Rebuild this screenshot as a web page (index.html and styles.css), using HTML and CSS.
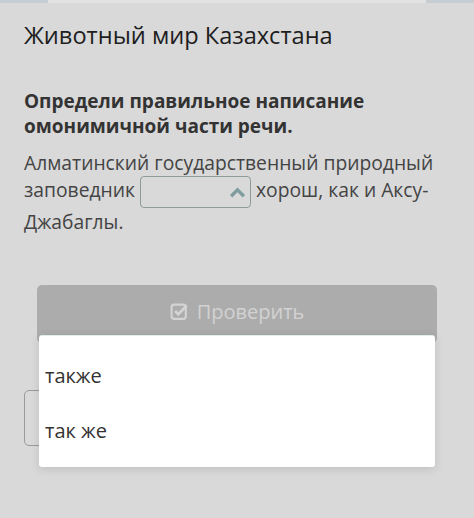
FILE: index.html
```html
<!DOCTYPE html>
<html lang="ru">

<head>
    <meta charset="UTF-8">
    <meta name="viewport" content="width=device-width, initial-scale=1.0">
    <title>Животный мир Казахстана</title>
    <link rel="stylesheet" href="styles.css">
</head>

<body>
    <div class="topbar">
        <div class="tab"></div>
        <div class="tab"></div>
    </div>
    <div class="page">
        <!--Title---------------------------------------------------------------->
        <h1 class="title">Животный мир Казахстана</h1>

        <!--Task----------------------------------------------------------------->
        <p class="task">Определи правильное написание омонимичной части речи.</p>
        <p class="text">Алматинский государственный природный заповедник
            <span class="select"><svg class="chevron" viewBox="0 0 16 10" width="17" height="11">
                    <path d="M2 8.5 L8 2.5 L14 8.5" fill="none" stroke="#7f9c9e" stroke-width="3.2" />
                </svg></span>
            хорош, как и Аксу-Джабаглы.</p>

        <!--Check button + dropdown---------------------------------------------->
        <div class="actions">
            <button class="btnCheck" type="button">
                <svg class="checkIcon" viewBox="0 0 18 18" width="19" height="19">
                    <rect x="1.5" y="2.5" width="13.5" height="13.5" rx="2.5" fill="none" stroke="#d4d4d4"
                        stroke-width="2" />
                    <path d="M4.8 8.6 L7.8 11.6 L15.8 3.4" fill="none" stroke="#d4d4d4" stroke-width="2.6" />
                </svg>
                Проверить
            </button>
            <div class="nextBox"></div>

            <ul class="dropdown">
                <li>также</li>
                <li>так же</li>
            </ul>
        </div>
    </div>
</body>

</html>
```

FILE: styles.css
```css
body {
    margin: 0;
    background-color: #d9d9d9;
    color: #1e1e1e;
    font-family: "Open Sans", "Noto Sans", sans-serif;
}

.topbar {
    display: flex;
    justify-content: space-between;
    height: 3px;
    background-color: #e2e2e2;
}

.tab {
    width: 48px;
    background-color: #c6ced4;
}

.page {
    padding: 0 24px 70px;
}

.title {
    margin: 0;
    padding-top: 16px;
    font-size: 23.6px;
    font-weight: 400;
    line-height: 32px;
}

.task {
    margin: 38px 0 0;
    font-size: 19px;
    font-weight: 700;
    line-height: 25px;
    color: #333;
}

.text {
    margin: 10px 0 0;
    font-size: 19.3px;
    line-height: 27px;
    color: #444;
}

.select {
    display: inline-flex;
    align-items: center;
    justify-content: flex-end;
    box-sizing: border-box;
    width: 111px;
    height: 32px;
    padding-right: 4px;
    vertical-align: middle;
    border: 1px solid #8e9b9b;
    border-radius: 4px;
}

.actions {
    position: relative;
    margin-top: 50px;
}

.btnCheck {
    display: flex;
    align-items: center;
    justify-content: center;
    gap: 8px;
    width: 400px;
    height: 58px;
    margin-left: 13px;
    padding: 0 0 6px;
    border: none;
    border-radius: 5px;
    background-color: #acacac;
    color: #d2d2d2;
    font-family: inherit;
    font-size: 20px;
}

.nextBox {
    box-sizing: border-box;
    width: 60px;
    height: 56px;
    margin-top: 47px;
    border: 1px solid #9a9a9a;
    border-radius: 5px;
}

.dropdown {
    position: absolute;
    top: 50px;
    left: 15px;
    box-sizing: border-box;
    width: 396px;
    height: 132px;
    margin: 0;
    padding: 12px 0 0;
    list-style: none;
    background-color: #fff;
    border-top: 1px solid #e3eded;
    border-radius: 3px;
    box-shadow: 0 2px 10px rgba(0, 0, 0, 0.12);
}

.dropdown li {
    padding: 0 6px;
    height: 55px;
    line-height: 55px;
    font-size: 20px;
    color: #333;
}
```
